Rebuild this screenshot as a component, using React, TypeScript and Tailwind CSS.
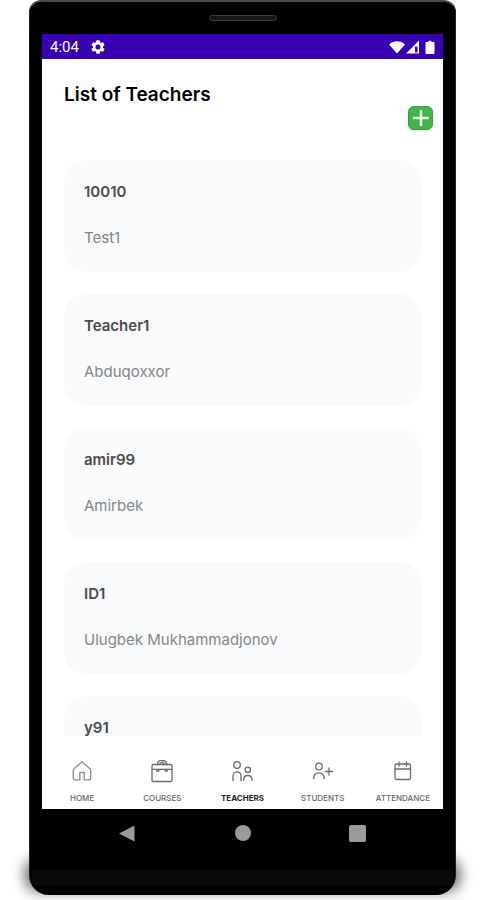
import React from 'react';

type Teacher = { id: string; name: string };

const teachers: Teacher[] = [
  { id: '10010', name: 'Test1' },
  { id: 'Teacher1', name: 'Abduqoxxor' },
  { id: 'amir99', name: 'Amirbek' },
  { id: 'ID1', name: 'Ulugbek Mukhammadjonov' },
  { id: 'y91', name: '' },
];

function Icon({ children }: { children: React.ReactNode }) {
  return (
    <svg
      viewBox="0 0 24 24"
      className="h-6 w-6"
      fill="none"
      stroke="#6a6a6a"
      strokeWidth="1.3"
      strokeLinecap="round"
      strokeLinejoin="round"
      aria-hidden="true"
    >
      {children}
    </svg>
  );
}

const tabs = [
  {
    label: 'HOME',
    icon: (
      <Icon>
        <path
          stroke="#8a8a8a"
          d="M3.3 11.2q0-.9.7-1.500L12 3l8 6.700q.7.6.7 1.500v8q0 1.600-1.600 1.600h-4.900v-7.300H9.800v7.300H4.900q-1.600 0-1.600-1.600z"
        />
      </Icon>
    ),
  },
  {
    label: 'COURSES',
    icon: (
      <Icon>
        <rect x="2" y="5.500" width="20" height="17" rx="1.200" />
        <path d="M2 10.300h20" />
        <path d="M7.500 5.500c0-2.400 1.600-3.800 3.300-3.800h2.400c1.700 0 3.300 1.400 3.300 3.800M9.700 5.500c0-1.200.6-1.900 1.500-1.900h1.600c.9 0 1.500.7 1.500 1.900" />
        <path d="M6.800 10.500v1.700h2v-1.700M15.200 10.500v1.700h2v-1.700" />
      </Icon>
    ),
  },
  {
    label: 'TEACHERS',
    icon: (
      <Icon>
        <circle cx="7" cy="6" r="3.300" />
        <path d="M3 21.500v-4.700a4 4 0 0 1 8 0v4.700" />
        <circle cx="17.800" cy="10.800" r="2.700" />
        <path d="M13.600 21.200c0-2.900 1.600-4.700 4.200-4.700s4.200 1.800 4.200 4.700" />
      </Icon>
    ),
  },
  {
    label: 'STUDENTS',
    icon: (
      <Icon>
        <circle cx="8" cy="7.500" r="3.300" />
        <path d="M2.700 19.500c0-3.500 2-5.600 5.300-5.600s5.300 2.100 5.300 5.600M18 9v7M14.500 12.500h7" />
      </Icon>
    ),
  },
  {
    label: 'ATTENDANCE',
    icon: (
      <Icon>
        <rect x="4" y="5" width="15.500" height="15.500" rx="1.800" />
        <path d="M4 10h15.500M8 3v4M15.500 3v4" />
      </Icon>
    ),
  },
];

function StatusBar() {
  return (
    <div className="flex h-[25px] shrink-0 items-center justify-between bg-[#3700b3] px-2 text-white">
      <div className="flex items-center gap-3">
        <span className="font-['Roboto',sans-serif] text-[15px] leading-5">4:04</span>
        <svg viewBox="2 2 20 20" className="h-[14px] w-[14px]" fill="currentColor" aria-hidden="true">
          <path
            fillRule="evenodd"
            d="M19.140 12.940c.04-.3.06-.61.06-.94s-.02-.64-.07-.94l2.030-1.580a.49.49 0 0 0 .12-.61l-1.920-3.320a.49.49 0 0 0-.59-.22l-2.390.96a7 7 0 0 0-1.620-.94l-.36-2.540A.48.48 0 0 0 13.920 2.400h-3.840a.48.48 0 0 0-.47.41l-.36 2.540c-.59.24-1.130.57-1.620.94l-2.390-.96a.48.48 0 0 0-.59.22L2.740 8.870a.48.48 0 0 0 .12.61l2.030 1.580a6 6 0 0 0 0 1.880l-2.030 1.580a.49.49 0 0 0-.12.61l1.920 3.320c.12.22.37.29.59.22l2.390-.96c.5.38 1.030.7 1.620.94l.36 2.540c.05.24.24.41.48.41h3.840c.24 0 .44-.17.47-.41l.36-2.540a7 7 0 0 0 1.620-.94l2.390.96c.22.08.47 0 .59-.22l1.920-3.320a.48.48 0 0 0-.12-.61zM12 15.600a3.600 3.600 0 1 1 0-7.200 3.600 3.600 0 0 1 0 7.200"
          />
        </svg>
      </div>
      <svg viewBox="0 0 46 14" className="h-[14px] w-[46px]" fill="currentColor" aria-hidden="true">
        <path d="M0 4.500C4.500.2 11.500.2 16 4.500L8 13.500z" />
        <path fillRule="evenodd" d="M17 13.500 30 .5v13zM26 6.500v6h2.500v-6z" />
        <path d="M37.500 2h2V.8h3V2h2q1 0 1 1v10q0 1-1 1h-7q-1 0-1-1V3q0-1 1-1" />
      </svg>
    </div>
  );
}

function TeacherCard({ teacher }: { teacher: Teacher }) {
  return (
    <li className="h-28 shrink-0 rounded-[22px] bg-[#f8fafc] px-5 pt-[22px]">
      <h2 className="text-[15px] leading-5 font-semibold text-[#4a4a4a]">{teacher.id}</h2>
      <p className="mt-[26px] text-[15px] leading-5 text-[#858585]">{teacher.name}</p>
    </li>
  );
}

function TabBar() {
  return (
    <nav className="grid h-[73px] shrink-0 grid-cols-5 bg-white">
      {tabs.map((tab) => (
        <a key={tab.label} href="#" className="flex flex-col items-center gap-[9px] pt-[23px]">
          {tab.icon}
          <span
            className={
              tab.label === 'TEACHERS'
                ? 'text-[8px] leading-3 font-bold text-[#222222]'
                : 'text-[8px] leading-3 font-medium text-[#666666]'
            }
          >
            {tab.label}
          </span>
        </a>
      ))}
    </nav>
  );
}

function SystemButtons() {
  return (
    <div className="grid h-12 shrink-0 grid-cols-3 place-items-center px-10">
      <button type="button" aria-label="Back">
        <svg viewBox="0 0 17 17" className="h-[17px] w-[17px]" fill="#9b9b9b">
          <path d="M15.500.5v16L0 8.500z" />
        </svg>
      </button>
      <button type="button" aria-label="Home" className="h-4 w-4 rounded-full bg-[#9b9b9b]" />
      <button type="button" aria-label="Recent apps" className="h-[17px] w-[17px] rounded-xs bg-[#9b9b9b]" />
    </div>
  );
}

export default function App() {
  return (
    <div className="h-screen overflow-hidden bg-white pr-[27px] pb-[5px] pl-[29px] font-['Inter',sans-serif]">
      <div className="relative isolate h-full">
        {/* soft shadow beside the lower corners of the device */}
        <div className="absolute -inset-x-1 bottom-1 -z-10 h-8 rounded-xl bg-black/60 blur-[7px]" />
        <div className="flex h-full flex-col rounded-t-xl rounded-b-[20px] border-x border-t-2 border-x-[#222222] border-t-[#4a4a4a] bg-black">
          <div className="flex h-8 shrink-0 items-center justify-center">
            <div className="h-[6px] w-[68px] rounded-full border border-[#3c3c3c] bg-[#161616]" />
          </div>

          <div className="mx-3 flex min-h-0 flex-1 flex-col bg-white">
            <StatusBar />
            <header className="flex shrink-0 flex-col pt-[25px] pr-[10px] pl-[22px]">
              <h1 className="text-[19px] leading-[22px] font-semibold text-black">List of Teachers</h1>
              <button
                type="button"
                aria-label="Add teacher"
                className="flex h-6 w-[25px] items-center justify-center self-end rounded-md border border-[#3a9a41] bg-[#43b34b] shadow-sm"
              >
                <svg viewBox="0 0 18 18" className="h-[18px] w-[18px]" fill="none" stroke="#e6f8e6" strokeWidth="2.500">
                  <path d="M9 1v16M1 9h16" />
                </svg>
              </button>
            </header>
            <ul className="mt-[30px] flex min-h-0 flex-1 flex-col gap-[22px] overflow-hidden px-[22px]">
              {teachers.map((teacher) => (
                <TeacherCard key={teacher.id} teacher={teacher} />
              ))}
            </ul>
            <TabBar />
          </div>

          <SystemButtons />
          <div className="mx-[2px] mt-3 mb-[9px] h-[17px] shrink-0 bg-[#090909]" />
        </div>
      </div>
    </div>
  );
}
